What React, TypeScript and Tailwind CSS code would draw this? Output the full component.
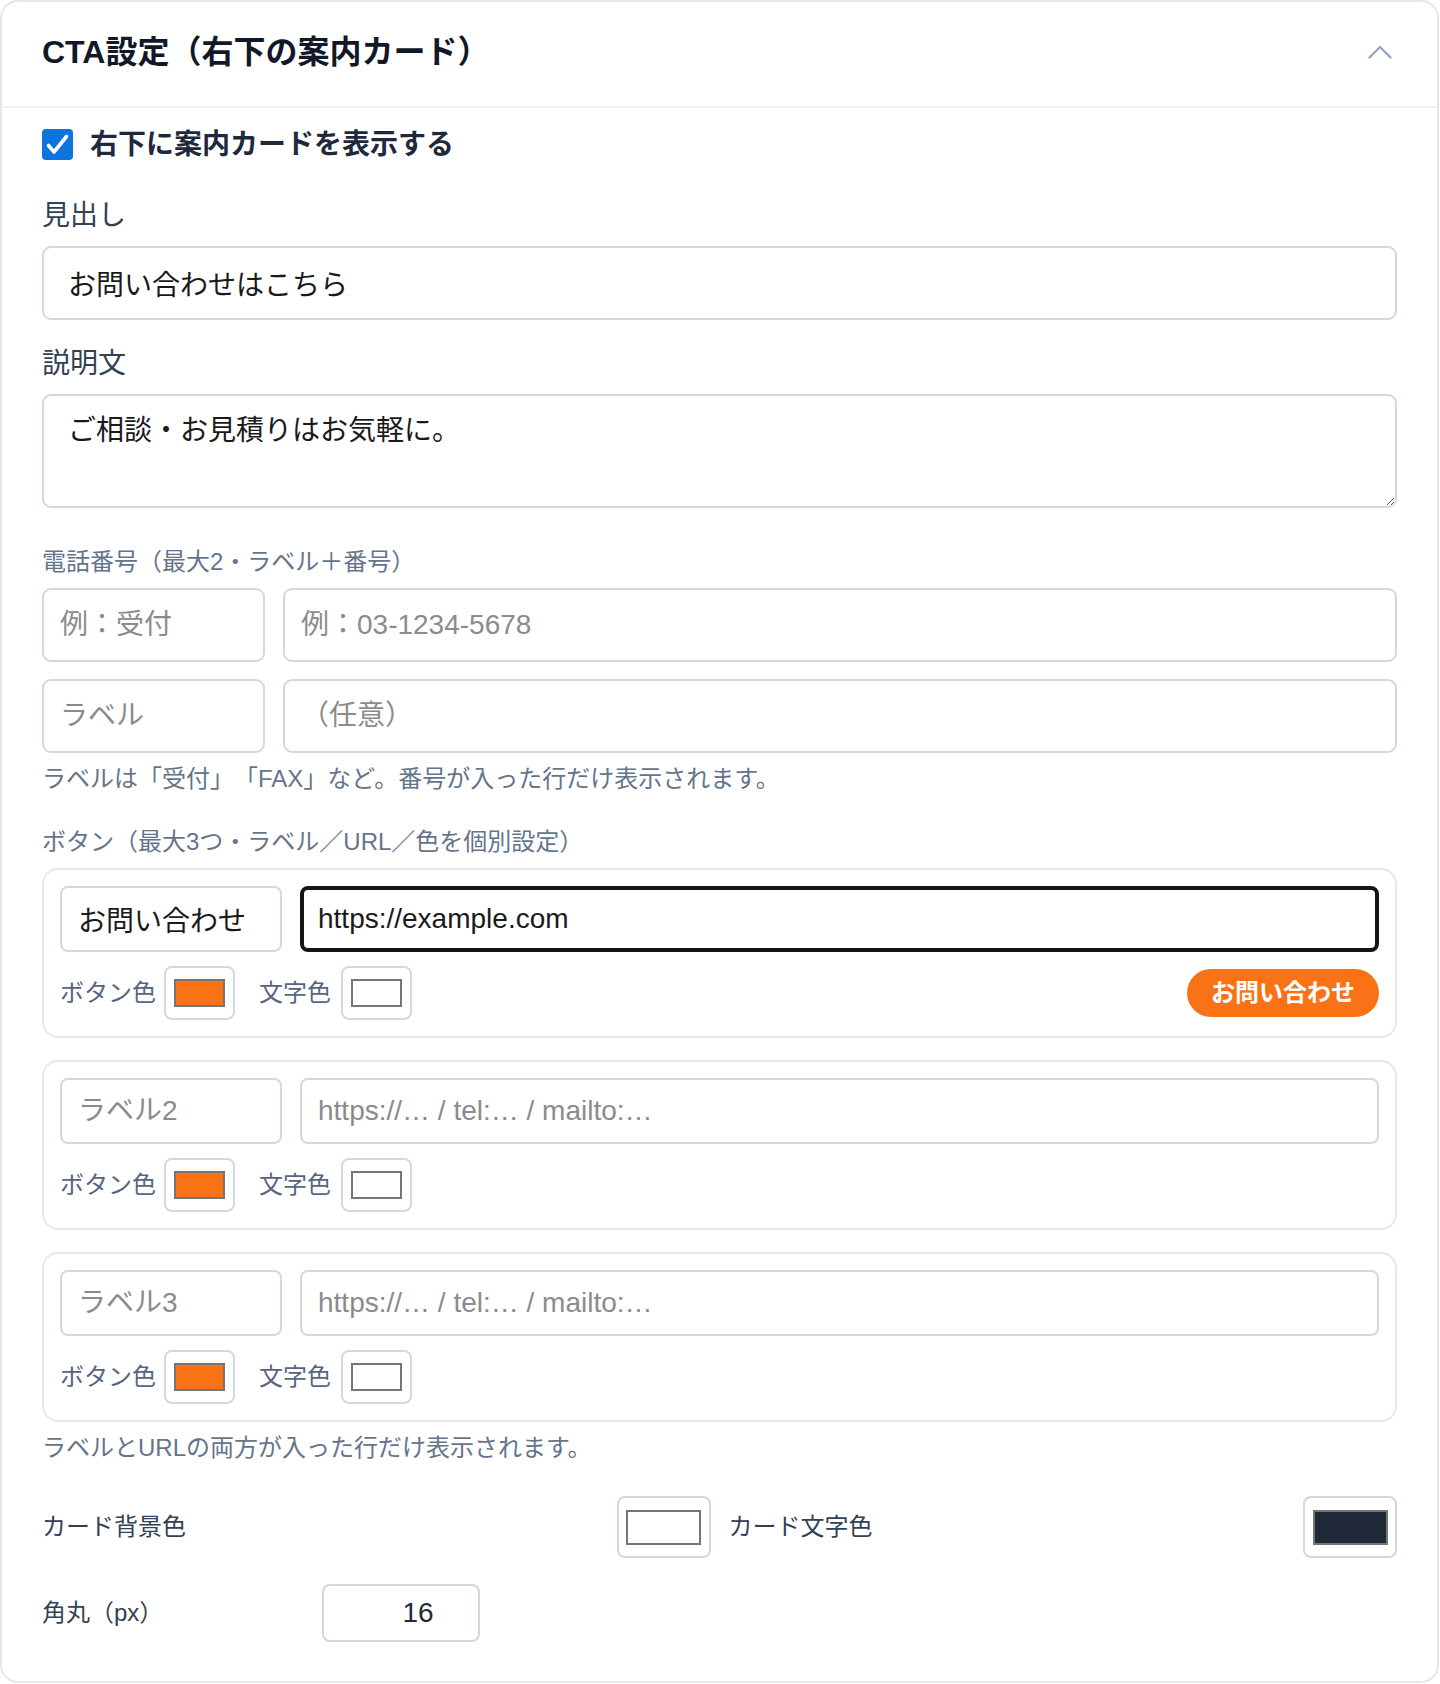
import React, { useState } from "react";

const Swatch = ({ fill, big }: { fill: string; big?: boolean }) => (
  <div
    className={
      big
        ? "flex h-[62px] w-[94px] items-center justify-center rounded-lg border-2 border-[#cfd8e3] bg-white"
        : "flex h-[54px] w-[71px] items-center justify-center rounded-lg border-2 border-[#cfd8e3] bg-white"
    }
  >
    <div className={(big ? "h-[35px] w-[75px]" : "h-[28px] w-[51px]") + " border-2 border-[#767676] " + fill} />
  </div>
);

const ButtonCard = ({
  label,
  url,
  labelPh,
  focused,
  preview,
}: {
  label?: string;
  url?: string;
  labelPh: string;
  focused?: boolean;
  preview?: boolean;
}) => (
  <div className="rounded-2xl border-2 border-[#e5e7eb] p-4">
    <div className="flex gap-[18px]">
      <input
        type="text"
        defaultValue={label}
        placeholder={labelPh}
        className="h-[66px] w-[222px] rounded-lg border-2 border-[#cfd8e3] px-4 text-[28px] text-[#1a1a1a] outline-none placeholder:text-[#8b8b8b]"
      />
      <input
        type="text"
        defaultValue={url}
        placeholder="https://… / tel:… / mailto:…"
        className={
          focused
            ? "h-[66px] min-w-0 flex-1 rounded-lg border-4 border-[#151515] pl-[14px] pr-4 text-[28px] text-[#1a1a1a] outline-none placeholder:text-[#8b8b8b]"
            : "h-[66px] min-w-0 flex-1 rounded-lg border-2 border-[#cfd8e3] px-4 text-[28px] text-[#1a1a1a] outline-none placeholder:text-[#8b8b8b]"
        }
      />
    </div>
    <div className="mt-[14px] flex h-[54px] items-center">
      <span className="text-[24px] text-[#56657d]">ボタン色</span>
      <div className="ml-2">
        <Swatch fill="bg-[#f97316]" />
      </div>
      <span className="ml-6 text-[24px] text-[#56657d]">文字色</span>
      <div className="ml-[10px]">
        <Swatch fill="bg-white" />
      </div>
      {preview && (
        <button
          type="button"
          className="ml-auto h-[48px] rounded-full bg-[#f97316] px-6 text-[24px] font-bold text-white"
        >
          お問い合わせ
        </button>
      )}
    </div>
  </div>
);

const App = () => {
  const [show, setShow] = useState(true);

  return (
    <div className="min-h-screen bg-white font-['Liberation_Sans','Noto_Sans_CJK_JP',sans-serif] [text-spacing-trim:space-all]">
      <div className="w-[1439px] rounded-[18px] border-2 border-[#e4e7ec] bg-white">
        {/* header */}
        <div className="flex h-[106px] items-center justify-between border-b-2 border-[#eff1f3] pb-1 pl-10 pr-[45px]">
          <h2 className="text-[32px] font-bold text-[#111827]">CTA設定（右下の案内カード）</h2>
          <svg width="24" height="14" viewBox="0 0 24 14" fill="none">
            <polyline points="1.5,12.5 12,2 22.5,12.5" stroke="#94a3b8" strokeWidth="2.2" strokeLinecap="round" strokeLinejoin="round" />
          </svg>
        </div>

        <div className="flex flex-col px-10 pb-[39px] pt-[21px]">
          <label className="flex h-[31px] items-center gap-[17px]" onClick={() => setShow(!show)}>
            <span
              className={
                show
                  ? "flex h-[31px] w-[31px] items-center justify-center rounded-[4px] bg-[#0b74de]"
                  : "flex h-[31px] w-[31px] items-center justify-center rounded-[4px] border-2 border-[#8c8f94] bg-white"
              }
            >
              {show && (
                <svg width="31" height="31" viewBox="0 0 31 31" fill="none">
                  <path d="M6.5 16.5l5.5 6.5L24.5 7.5" stroke="white" strokeWidth="3.6" strokeLinecap="round" strokeLinejoin="round" />
                </svg>
              )}
            </span>
            <span className="text-[28px] font-bold text-[#1e293b]">右下に案内カードを表示する</span>
          </label>

          <div className="mt-[38px] text-[28px] leading-9 text-[#334155]">見出し</div>
          <input
            type="text"
            defaultValue="お問い合わせはこちら"
            className="mt-3 h-[74px] rounded-[9px] border-2 border-[#cfd8e3] px-6 text-[28px] text-[#1a1a1a] outline-none"
          />

          <div className="mt-[26px] text-[28px] leading-9 text-[#334155]">説明文</div>
          <textarea
            defaultValue="ご相談・お見積りはお気軽に。"
            className="mt-3 h-[114px] resize-y rounded-[9px] border-2 border-[#cfd8e3] px-6 pt-[14px] text-[28px] leading-[42px] text-[#1a1a1a] outline-none"
          />

          <div className="mt-[38px] text-[24px] leading-8 text-[#64748b]">電話番号（最大2・ラベル＋番号）</div>
          <div className="mt-[10px] flex gap-[18px]">
            <input
              type="text"
              placeholder="例：受付"
              className="h-[74px] w-[223px] rounded-[9px] border-2 border-[#cfd8e3] px-4 text-[28px] outline-none placeholder:text-[#8b8b8b]"
            />
            <input
              type="text"
              placeholder="例：03-1234-5678"
              className="h-[74px] min-w-0 flex-1 rounded-[9px] border-2 border-[#cfd8e3] px-4 text-[28px] outline-none placeholder:text-[#8b8b8b]"
            />
          </div>
          <div className="mt-[17px] flex gap-[18px]">
            <input
              type="text"
              placeholder="ラベル"
              className="h-[74px] w-[223px] rounded-[9px] border-2 border-[#cfd8e3] px-4 text-[28px] outline-none placeholder:text-[#8b8b8b]"
            />
            <input
              type="text"
              placeholder="（任意）"
              className="h-[74px] min-w-0 flex-1 rounded-[9px] border-2 border-[#cfd8e3] px-4 text-[28px] outline-none placeholder:text-[#8b8b8b]"
            />
          </div>
          <p className="mt-[10px] text-[24px] leading-8 text-[#64748b]">
            ラベルは「受付」「FAX」など。番号が入った行だけ表示されます。
          </p>

          <div className="mt-[31px] text-[24px] leading-8 text-[#64748b]">ボタン（最大3つ・ラベル／URL／色を個別設定）</div>
          <div className="mt-[10px] flex flex-col gap-[22px]">
            <ButtonCard label="お問い合わせ" url="https://example.com" labelPh="ラベル1" focused preview />
            <ButtonCard labelPh="ラベル2" />
            <ButtonCard labelPh="ラベル3" />
          </div>
          <p className="mt-[10px] text-[24px] leading-8 text-[#64748b]">ラベルとURLの両方が入った行だけ表示されます。</p>

          <div className="mt-[32px] grid grid-cols-2 gap-[18px]">
            <div className="flex h-[62px] items-center justify-between">
              <span className="text-[24px] text-[#334155]">カード背景色</span>
              <Swatch fill="bg-white" big />
            </div>
            <div className="flex h-[62px] items-center justify-between">
              <span className="text-[24px] text-[#334155]">カード文字色</span>
              <Swatch fill="bg-[#1f2937]" big />
            </div>
          </div>

          <div className="mt-[26px] flex h-[58px] items-center">
            <span className="w-[280px] text-[24px] text-[#334155]">角丸（px）</span>
            <input
              type="text"
              defaultValue="16"
              className="h-[58px] w-[158px] rounded-lg border-2 border-[#cfd8e3] pl-[34px] text-center text-[28px] text-[#1f2937] outline-none"
            />
          </div>
        </div>
      </div>
    </div>
  );
};

export default App;
